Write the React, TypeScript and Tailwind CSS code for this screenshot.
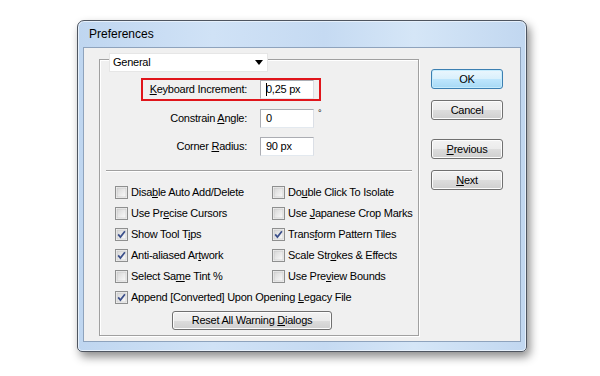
import type { ReactNode } from "react";

const U = ({ children }: { children: ReactNode }) => <span className="underline underline-offset-[1px]">{children}</span>;

const CheckBox = ({ checked }: { checked?: boolean }) => (
  <svg width="13" height="13" viewBox="0 0 13 13" className="shrink-0">
    <defs>
      <linearGradient id="cbg" x1="0" y1="0" x2="1" y2="1">
        <stop offset="0" stopColor="#d6d6d6" />
        <stop offset="1" stopColor="#fbfbfb" />
      </linearGradient>
    </defs>
    <rect x="0.5" y="0.5" width="12" height="12" fill="#f4f4f4" stroke="#8e8f8f" />
    <rect x="2" y="2" width="9" height="9" fill="url(#cbg)" stroke="#c4c4c4" strokeWidth="0.6" />
    {checked && <path d="M3.2 6.4 L5.4 9.1 L9.9 3.2" fill="none" stroke="#3b4f8a" strokeWidth="1.7" />}
  </svg>
);

const Check = ({ checked, children }: { checked?: boolean; children: ReactNode }) => (
  <div className="flex h-[21px] items-center gap-[3px] whitespace-nowrap">
    <CheckBox checked={checked} />
    <span>{children}</span>
  </div>
);

const Btn = ({ children, primary }: { children: ReactNode; primary?: boolean }) => (
  <button
    className={
      primary
        ? "h-[20px] w-[72px] rounded-[3px] border border-[#3c7fb1] bg-[linear-gradient(#eaf6fd_0%,#d9f0fc_50%,#bee6fd_51%,#a7d9f5_100%)] text-[11px] shadow-[inset_0_0_0_1px_#c6ecfd]"
        : "h-[20px] w-[72px] rounded-[3px] border border-[#707070] bg-[linear-gradient(#f2f2f2_0%,#ebebeb_50%,#dddddd_51%,#cfcfcf_100%)] text-[11px] shadow-[inset_0_0_0_1px_#fcfcfc]"
    }
  >
    {children}
  </button>
);

const Field = ({ children }: { children: ReactNode }) => (
  <div className="flex h-[19px] w-[54px] items-center whitespace-nowrap border border-[#abadb3] border-r-[#dbdfe6] border-b-[#e3e9ef] bg-white pl-[5px]">
    {children}
  </div>
);

export default function App() {
  return (
    <div className="h-[376px] w-[600px] bg-white pl-[77px] pt-[20px] font-['Liberation_Sans',Arial,sans-serif] text-[11px] text-black">
      <div className="flex h-[332px] w-[450px] flex-col rounded-t-[7px] rounded-b-[5px] border border-[#4e5560] bg-[linear-gradient(90deg,#bfd6f0_0%,#d0e2f6_30%,#c5daf2_55%,#d5e6f7_75%,#c1d7f0_100%)] px-[5px] pb-[9px] shadow-[3px_5px_10px_rgba(0,0,0,0.45),inset_0_0_0_1px_#e6f0fb]">
        <div className="flex h-[26px] items-center pl-[6px] text-[12px] text-black">Preferences</div>
        <div className="flex flex-1 border border-[#8ea3bd] bg-[#f0f0f0] tracking-[-0.25px]">
          <div className="ml-[15px] mt-[11px] flex h-[277px] w-[320px] flex-col border border-[#a0a0a0] shadow-[inset_1px_1px_0_#fff,1px_1px_0_#fff]">
            <div className="-mt-[7px] ml-[9px] flex h-[19px] w-[159px] items-center justify-between border border-[#e6e6e6] bg-white pl-[3px] pr-[4px] text-[11px]">
              <span>General</span>
              <svg width="8" height="5" viewBox="0 0 8 5">
                <path d="M0 0 L8 0 L4 5 Z" fill="#000" />
              </svg>
            </div>

            <div className="ml-[41px] mt-[6px] flex w-fit items-center border-2 border-[#e0151b] pl-[5px] pr-[5px]">
              <span className="w-[99px] whitespace-nowrap text-right">
                <U>K</U>eyboard Increment:
              </span>
              <div className="ml-[13px]">
                <Field>
                  <span className="mr-[-1px] h-[13px] w-[1px] bg-black" />
                  <span>0,25 px</span>
                </Field>
              </div>
            </div>

            <div className="mt-[8px] flex items-center">
              <span className="w-[147px] whitespace-nowrap text-right">
                Constrain <U>A</U>ngle:
              </span>
              <div className="ml-[13px]">
                <Field>0</Field>
              </div>
              <span className="ml-[4px] self-start text-[9px] leading-[9px]">°</span>
            </div>

            <div className="mt-[9px] flex items-center">
              <span className="w-[147px] whitespace-nowrap text-right">
                Corner <U>R</U>adius:
              </span>
              <div className="ml-[13px]">
                <Field>90 px</Field>
              </div>
            </div>

            <div className="mx-[6px] mt-[14px] h-[2px] border-t border-[#a0a0a0] border-b border-b-white" />

            <div className="mt-[10px] flex pl-[15px]">
              <div className="flex w-[157px] flex-col">
                <Check>
                  Disa<U>b</U>le Auto Add/Delete
                </Check>
                <Check>
                  Use Pr<U>e</U>cise Cursors
                </Check>
                <Check checked>
                  Show Tool T<U>i</U>ps
                </Check>
                <Check checked>
                  Anti-aliased Ar<U>t</U>work
                </Check>
                <Check>
                  Select Sa<U>m</U>e Tint %
                </Check>
              </div>
              <div className="flex flex-col">
                <Check>
                  Do<U>u</U>ble Click To Isolate
                </Check>
                <Check>
                  Use <U>J</U>apanese Crop Marks
                </Check>
                <Check checked>
                  Trans<U>f</U>orm Pattern Tiles
                </Check>
                <Check>
                  Scale Str<U>o</U>kes &amp; Effects
                </Check>
                <Check>
                  Use Pre<U>v</U>iew Bounds
                </Check>
              </div>
            </div>
            <div className="pl-[15px]">
              <Check checked>
                Append [Converted] Upon Opening <U>L</U>egacy File
              </Check>
            </div>

            <div className="ml-[72px] mt-[3px]">
              <button className="h-[19px] w-[160px] rounded-[3px] border border-[#707070] bg-[linear-gradient(#f2f2f2_0%,#ebebeb_50%,#dddddd_51%,#cfcfcf_100%)] text-[11px] shadow-[inset_0_0_0_1px_#fcfcfc]">
                Reset All Warning <U>D</U>ialogs
              </button>
            </div>
          </div>

          <div className="ml-[12px] mt-[21px] flex flex-col">
            <Btn primary>OK</Btn>
            <div className="mt-[11px]">
              <Btn>Cancel</Btn>
            </div>
            <div className="mt-[19px]">
              <Btn>
                <U>P</U>revious
              </Btn>
            </div>
            <div className="mt-[11px]">
              <Btn>
                <U>N</U>ext
              </Btn>
            </div>
          </div>
        </div>
      </div>
    </div>
  );
}
